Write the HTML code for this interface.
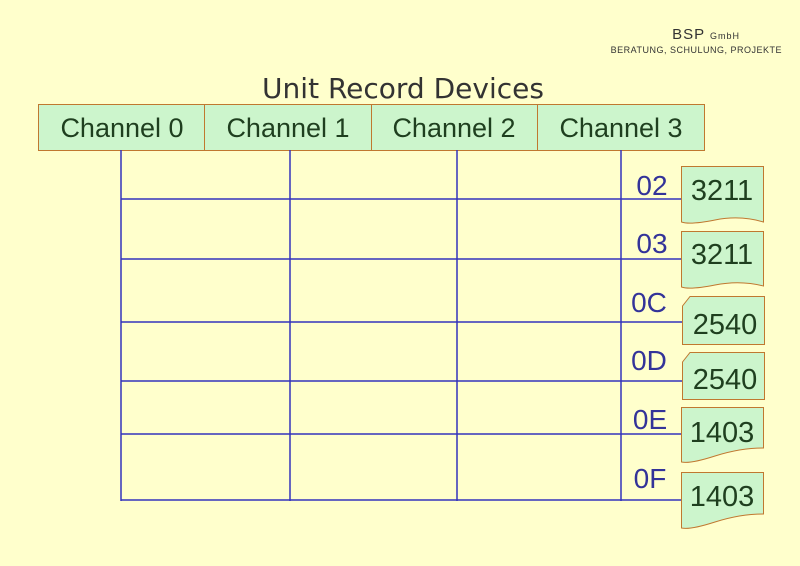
<!DOCTYPE html>
<html><head><style>
body{margin:0;width:800px;height:566px;background:#ffffcc;overflow:hidden;font-family:"Liberation Sans",sans-serif;}
svg{position:absolute;left:0;top:0}
</style></head><body>
<svg width="800" height="566" viewBox="0 0 800 566" font-family="Liberation Sans, sans-serif">
<rect width="800" height="566" fill="#ffffcc"/>
<text x="740" y="39" font-size="15" fill="#333" text-anchor="end" letter-spacing="1">BSP <tspan font-size="9">GmbH</tspan></text>
<text x="782" y="53" font-size="9" fill="#333" text-anchor="end" letter-spacing="0.5">BERATUNG, SCHULUNG, PROJEKTE</text>
<text x="403" y="98" font-size="28" fill="#333" text-anchor="middle" font-family="DejaVu Sans, sans-serif">Unit Record Devices</text>
<g stroke="#c07830" stroke-width="1" fill="#ccf5cc">
<rect x="38.5" y="104.5" width="666" height="46"/>
<line x1="204.5" y1="104" x2="204.5" y2="150"/>
<line x1="371.5" y1="104" x2="371.5" y2="150"/>
<line x1="537.5" y1="104" x2="537.5" y2="150"/>
</g>
<g font-size="27" fill="#1f3f1f" text-anchor="middle">
<text x="122" y="137">Channel 0</text>
<text x="288" y="137">Channel 1</text>
<text x="454" y="137">Channel 2</text>
<text x="621" y="137">Channel 3</text>
</g>
<g stroke="#3333bb" stroke-width="1.5">
<line x1="121" y1="150" x2="121" y2="501"/>
<line x1="290" y1="150" x2="290" y2="501"/>
<line x1="457" y1="150" x2="457" y2="501"/>
<line x1="621" y1="150" x2="621" y2="501"/>
<line x1="121" y1="199" x2="681" y2="199"/>
<line x1="121" y1="259" x2="681" y2="259"/>
<line x1="121" y1="322" x2="682" y2="322"/>
<line x1="121" y1="381" x2="682" y2="381"/>
<line x1="121" y1="434" x2="681" y2="434"/>
<line x1="121" y1="500" x2="681" y2="500"/>
</g>
<g font-size="28" fill="#333399" text-anchor="middle">
<text x="652" y="195">02</text>
<text x="652" y="253">03</text>
<text x="649" y="312">0C</text>
<text x="649" y="370">0D</text>
<text x="650" y="429">0E</text>
<text x="650" y="488">0F</text>
</g>
<g stroke="#c07830" stroke-width="1" fill="#ccf5cc">
<path d="M681.5 166.5H763.5V222Q740 215 715 220T681.5 222Z"/>
<path d="M681.5 231.5H763.5V286Q740 280 715 285T681.5 287Z"/>
<path d="M690 296.5H764.5V344.5H682.5V306Z"/>
<path d="M690 352.5H764.5V399.5H682.5V362Z"/>
<path d="M681.5 407.5H763.5V448Q740 448 715 456T681.5 462Z"/>
<path d="M681.5 472.5H763.5V514Q740 514 715 522T681.5 528Z"/>
</g>
<g font-size="29" fill="#1f3f1f" text-anchor="middle">
<text x="722" y="200">3211</text>
<text x="722" y="264">3211</text>
<text x="725" y="334">2540</text>
<text x="725" y="389">2540</text>
<text x="722" y="442">1403</text>
<text x="722" y="506">1403</text>
</g>
</svg>
</body></html>
